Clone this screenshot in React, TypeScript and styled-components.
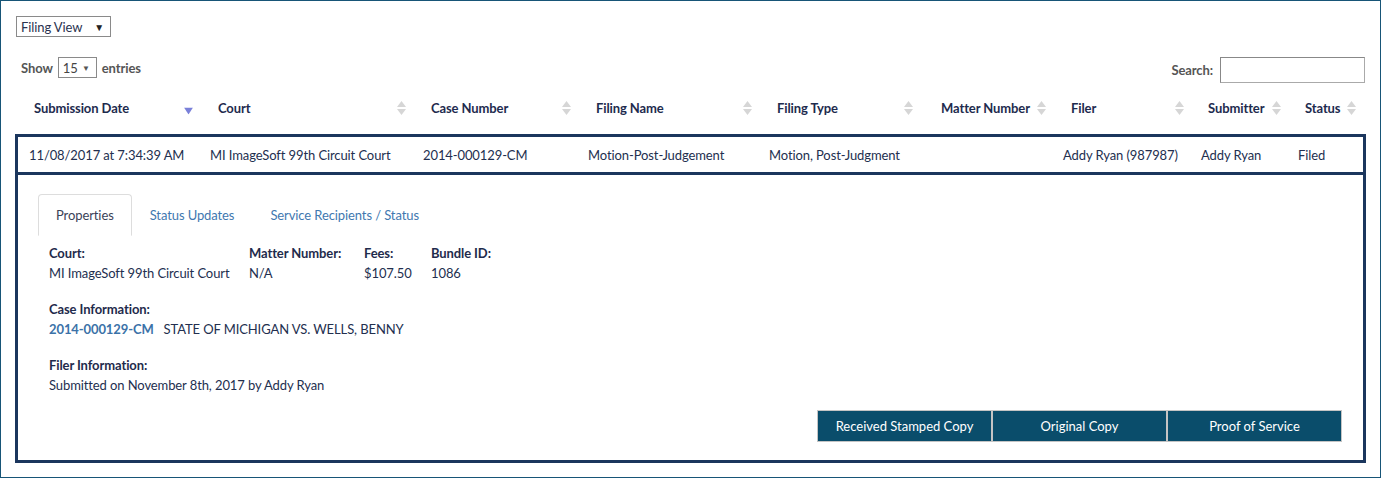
import React from "react";
import styled, { createGlobalStyle } from "styled-components";

const Global = createGlobalStyle`
  html, body { margin: 0; padding: 0; background: #fff; }
  body { font-family: Lato, "Open Sans", sans-serif; font-size: 13px; letter-spacing: -0.1px; color: #1f2c4c; }
  * { box-sizing: border-box; }
`;

const Page = styled.div`
  width: 1381px;
  height: 478px;
  border: 1px solid #175577;
  padding: 15px 14px 0 14px;
`;

const FakeSelect = styled.div<{ $w: number; $h: number }>`
  display: inline-flex;
  align-items: center;
  justify-content: space-between;
  width: ${(p) => p.$w}px;
  height: ${(p) => p.$h}px;
  border: 1px solid #8a8a8a;
  background: #fff;
  padding: 0 6px 0 4px;
  color: #2a3350;
  font-size: 13px;
`;

const Arrow = styled.span<{ $c: string; $s: number }>`
  font-size: ${(p) => p.$s}px;
  color: ${(p) => p.$c};
`;

const ViewRow = styled.div`
  margin-left: 1px;
  height: 21px;
  display: flex;
`;

const Controls = styled.div`
  margin-top: 20px;
  height: 26px;
  display: flex;
  justify-content: space-between;
  align-items: flex-start;
  padding: 0 1px 0 6px;
`;

const Label = styled.label`
  display: flex;
  align-items: center;
  gap: 5px;
  font-weight: bold;
  color: #555;
  font-size: 13px;
`;

const LengthWrap = styled(Label)`
  height: 21px;
`;

const SearchWrap = styled(Label)`
  height: 26px;
  gap: 7px;
`;

const SearchInput = styled.input`
  width: 145px;
  height: 26px;
  border: 1px solid #aaa;
  border-top-color: #888;
  border-left-color: #888;
  padding: 0 4px;
  font: inherit;
`;

const cols = "182px 213px 165px 181px 161px 133px 138px 97px 75px";

const HeadRow = styled.div`
  margin: 5px 3px 0 3px;
  height: 40px;
  display: grid;
  grid-template-columns: ${cols};
`;

const HeadCell = styled.div<{ $pl: number }>`
  position: relative;
  display: flex;
  align-items: center;
  padding-left: ${(p) => p.$pl}px;
  font-weight: bold;
  color: #1e2b4e;
  font-size: 13px;
  white-space: nowrap;
`;

const SortIcon = styled.svg`
  position: absolute;
  right: 7px;
  top: 50%;
  transform: translateY(-50%);
`;

const Box = styled.div`
  margin-top: 6px;
  border: 3px solid #1b365d;
  height: 329px;
  display: flex;
  flex-direction: column;
`;

const DataRow = styled.div`
  height: 38px;
  border-bottom: 3px solid #1b365d;
  display: grid;
  grid-template-columns: ${cols};
  align-items: center;
`;

const DataCell = styled.div<{ $pl?: number }>`
  padding-left: ${(p) => p.$pl ?? 10}px;
  color: #232f4f;
  white-space: nowrap;
`;

const Detail = styled.div`
  flex: 1;
  padding: 19px 21px 0 20px;
  display: flex;
  flex-direction: column;
`;

const TabNav = styled.div`
  display: flex;
  align-self: flex-start;
  border-bottom: 1px solid #ddd;
  min-width: 397px;
  height: 42px;
`;

const Tab = styled.div<{ $active?: boolean }>`
  flex-shrink: 0;
  white-space: nowrap;
  height: 42px;
  padding: 0 17px;
  display: flex;
  align-items: center;
  color: ${(p) => (p.$active ? "#3b4258" : "#3f78b0")};
  border: 1px solid ${(p) => (p.$active ? "#ddd" : "transparent")};
  border-bottom-color: ${(p) => (p.$active ? "#fff" : "transparent")};
  border-radius: 4px 4px 0 0;
  background: #fff;
  margin-bottom: -1px;
`;

const Props = styled.div`
  padding: 7px 0 0 11px;
  display: flex;
  flex-direction: column;
  gap: 16px;
  line-height: 20px;
`;

const PropGrid = styled.div`
  display: grid;
  grid-template-columns: 200px 115px 67px auto;
`;

const PropLabel = styled.div`
  font-weight: bold;
  color: #1f2b4c;
`;

const PropValue = styled.div`
  color: #232f4f;
`;

const CaseLink = styled.a`
  font-weight: bold;
  color: #3b72a8;
  text-decoration: none;
  margin-right: 10px;
`;

const Buttons = styled.div`
  margin-top: 15px;
  display: flex;
  justify-content: flex-end;
`;

const DocButton = styled.button`
  width: 175px;
  height: 32px;
  background: #0a4d6b;
  border: 1px solid #c4c4c4;
  color: #fff;
  font: inherit;
  font-size: 13px;
  cursor: pointer;
`;

const SortBoth = () => (
  <SortIcon width="9" height="14" viewBox="0 0 9 14">
    <path d="M4.5 0 L9 6 L0 6 Z" fill="#d6d6d6" />
    <path d="M4.5 14 L9 8 L0 8 Z" fill="#d6d6d6" />
  </SortIcon>
);

const SortDesc = () => (
  <SortIcon width="9" height="7" viewBox="0 0 9 7" style={{ top: "calc(50% + 3px)" }}>
    <path d="M0 0 L9 0 L4.5 7 Z" fill="#7a80d9" />
  </SortIcon>
);

const headers: { t: string; pl: number; desc?: boolean }[] = [
  { t: "Submission Date", pl: 16, desc: true },
  { t: "Court", pl: 18 },
  { t: "Case Number", pl: 18 },
  { t: "Filing Name", pl: 18 },
  { t: "Filing Type", pl: 18 },
  { t: "Matter Number", pl: 21 },
  { t: "Filer", pl: 18 },
  { t: "Submitter", pl: 17 },
  { t: "Status", pl: 17 },
];

const row = [
  "11/08/2017 at 7:34:39 AM",
  "MI ImageSoft 99th Circuit Court",
  "2014-000129-CM",
  "Motion-Post-Judgement",
  "Motion, Post-Judgment",
  "",
  "Addy Ryan (987987)",
  "Addy Ryan",
  "Filed",
];

export default function App() {
  return (
    <>
      <Global />
      <Page>
        <ViewRow>
          <FakeSelect $w={95} $h={21}>
            <span>Filing View</span>
            <Arrow $c="#222" $s={10}>▼</Arrow>
          </FakeSelect>
        </ViewRow>
        <Controls>
          <LengthWrap>
            Show
            <FakeSelect $w={39} $h={21}>
              <span style={{ color: "#444", fontWeight: "normal" }}>15</span>
              <Arrow $c="#555" $s={8}>▼</Arrow>
            </FakeSelect>
            entries
          </LengthWrap>
          <SearchWrap>
            Search:
            <SearchInput type="search" />
          </SearchWrap>
        </Controls>
        <HeadRow>
          {headers.map((h) => (
            <HeadCell key={h.t} $pl={h.pl}>
              {h.t}
              {h.desc ? <SortDesc /> : <SortBoth />}
            </HeadCell>
          ))}
        </HeadRow>
        <Box>
          <DataRow>
            {row.map((c, i) => (
              <DataCell key={i} $pl={i === 0 ? 11 : 10}>
                {c}
              </DataCell>
            ))}
          </DataRow>
          <Detail>
            <TabNav>
              <Tab $active>Properties</Tab>
              <Tab>Status Updates</Tab>
              <Tab>Service Recipients / Status</Tab>
            </TabNav>
            <Props>
              <PropGrid>
                <PropLabel>Court:</PropLabel>
                <PropLabel>Matter Number:</PropLabel>
                <PropLabel>Fees:</PropLabel>
                <PropLabel>Bundle ID:</PropLabel>
                <PropValue>MI ImageSoft 99th Circuit Court</PropValue>
                <PropValue>N/A</PropValue>
                <PropValue>$107.50</PropValue>
                <PropValue>1086</PropValue>
              </PropGrid>
              <div>
                <PropLabel>Case Information:</PropLabel>
                <PropValue>
                  <CaseLink href="#">2014-000129-CM</CaseLink>
                  STATE OF MICHIGAN VS. WELLS, BENNY
                </PropValue>
              </div>
              <div>
                <PropLabel>Filer Information:</PropLabel>
                <PropValue>Submitted on November 8th, 2017 by Addy Ryan</PropValue>
              </div>
            </Props>
            <Buttons>
              <DocButton>Received Stamped Copy</DocButton>
              <DocButton>Original Copy</DocButton>
              <DocButton>Proof of Service</DocButton>
            </Buttons>
          </Detail>
        </Box>
      </Page>
    </>
  );
}
